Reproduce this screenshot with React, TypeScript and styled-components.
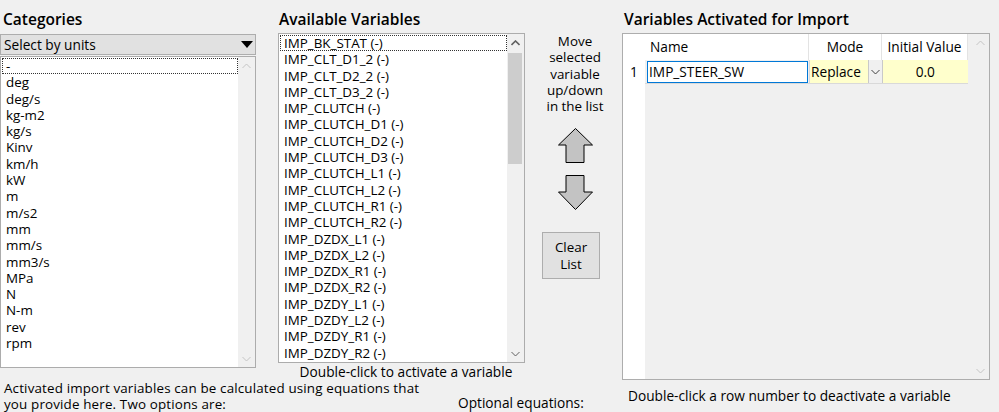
import React from "react";
import styled, { createGlobalStyle } from "styled-components";

const GlobalStyle = createGlobalStyle`
  html, body {
    margin: 0;
    padding: 0;
    background: #f0f0f0;
  }
  body {
    font-family: "Open Sans", "Noto Sans", sans-serif;
    font-size: 13.7px;
    color: #000;
  }
`;

const Page = styled.div`
  width: 999px;
  height: 412px;
  overflow: hidden;
  display: flex;
  flex-direction: column;
`;

const Top = styled.div`
  display: flex;
  height: 380px;
`;

const Column = styled.div<{ $width: number; $gap?: number }>`
  width: ${({ $width }) => $width}px;
  margin-left: ${({ $gap }) => $gap ?? 0}px;
  flex-shrink: 0;
  display: flex;
  flex-direction: column;
`;

const Heading = styled.div<{ $indent: number }>`
  box-sizing: border-box;
  height: 32px;
  padding: 10px 0 0 ${({ $indent }) => $indent}px;
  line-height: 19px;
  font-size: 15.5px;
  font-weight: 600;
  white-space: nowrap;
`;

const Select = styled.div`
  box-sizing: border-box;
  margin-top: 2px;
  height: 21px;
  border: 1px solid #adadad;
  background: #e1e1e1;
  display: flex;
  align-items: center;
  justify-content: space-between;
  padding: 0 2px 0 3px;
  line-height: 19px;
`;

const Caret = styled.span`
  width: 0;
  height: 0;
  border-left: 6px solid transparent;
  border-right: 6px solid transparent;
  border-top: 7px solid #000;
`;

const ListBox = styled.div<{ $height: number }>`
  box-sizing: border-box;
  margin-top: 1px;
  height: ${({ $height }) => $height}px;
  border: 1px solid #acacac;
  background: #fff;
  display: flex;
  overflow: hidden;
`;

const Items = styled.div`
  flex: 1;
  padding: 1px 0 0 1px;
`;

const Item = styled.div<{ $focused?: boolean }>`
  height: 16.3px;
  line-height: 16.3px;
  font-size: 13.4px;
  padding-left: 4px;
  white-space: nowrap;
  outline: ${({ $focused }) => ($focused ? "1px dotted #333" : "none")};
  outline-offset: -1px;
`;

const ScrollBar = styled.div`
  width: 17px;
  flex-shrink: 0;
  background: #f0f0f0;
  display: flex;
  flex-direction: column;
`;

const ScrollButton = styled.div`
  height: 17px;
  display: flex;
  align-items: center;
  justify-content: center;
`;

const Thumb = styled.div<{ $size: number }>`
  height: ${({ $size }) => $size}px;
  margin: 2px 2px 0 1px;
  background: #cdcdcd;
`;

const Spacer = styled.div`
  flex: 1;
`;

const Caption = styled.div`
  margin-top: 1px;
  padding-left: 9px;
  line-height: 16px;
  text-align: center;
  white-space: nowrap;
`;

const MoveText = styled.div`
  margin-top: 33px;
  padding-left: 3px;
  line-height: 16.3px;
  font-size: 13.4px;
  text-align: center;
`;

const ArrowHolder = styled.div<{ $top: number }>`
  margin: ${({ $top }) => $top}px 0 0 33px;
  width: 35px;
  height: 35px;
`;

const ClearButton = styled.div`
  box-sizing: border-box;
  margin: 22px 0 0 17px;
  width: 58px;
  height: 47px;
  border: 1px solid #adadad;
  background: #e1e1e1;
  display: flex;
  align-items: center;
  justify-content: center;
  text-align: center;
  line-height: 16.5px;
  font-size: 13.4px;
`;

const GridBox = styled.div`
  box-sizing: border-box;
  margin-top: 1px;
  height: 347px;
  border: 1px solid #adadad;
  background: #f0f0f0;
  display: flex;
`;

const RowHeaders = styled.div`
  width: 22px;
  background: #fff;
  display: flex;
  flex-direction: column;
`;

const RowHeaderCell = styled.div<{ $height: number }>`
  height: ${({ $height }) => $height}px;
  line-height: ${({ $height }) => $height}px;
  text-align: center;
`;

const Cells = styled.div`
  flex: 1;
  display: flex;
  flex-direction: column;
`;

const Row = styled.div<{ $height: number; $header?: boolean }>`
  display: flex;
  height: ${({ $height }) => $height}px;
  width: 323px;
  background: ${({ $header }) => ($header ? "#fff" : "#f0f0f0")};
  border-bottom: ${({ $header }) => ($header ? "none" : "1px solid #d9d9d9")};
`;

const HeadCell = styled.div<{ $width: number; $align: string }>`
  box-sizing: border-box;
  width: ${({ $width }) => $width}px;
  padding-left: ${({ $align }) => ($align === "left" ? "5px" : "0")};
  text-align: ${({ $align }) => $align};
  line-height: 26px;
  white-space: nowrap;
  border-right: 1px solid #e3e3e3;
`;

const NameCell = styled.div`
  box-sizing: border-box;
  width: 162px;
  margin: 1px 1px 0 2px;
  height: 22px;
  border: 1px solid #0078d7;
  background: #fff;
  padding-left: 1px;
  line-height: 20px;
`;

const ModeCell = styled.div`
  width: 73px;
  display: flex;
  background: #ffffcc;
  border-left: 1px solid #d9d9d9;
`;

const ModeText = styled.div`
  flex: 1;
  padding-left: 1px;
  line-height: 23px;
  white-space: nowrap;
`;

const DropButton = styled.div`
  width: 13px;
  flex-shrink: 0;
  background: #f0f0f0;
  border-left: 1px solid #c9c9c9;
  border-right: 1px solid #c9c9c9;
  display: flex;
  align-items: center;
  justify-content: center;
`;

const ValueCell = styled.div`
  width: 86px;
  background: #ffffcc;
  text-align: center;
  line-height: 23px;
`;

const Bottom = styled.div`
  display: grid;
  grid-template-columns: 454px 168px 1fr;
  height: 32px;
`;

const Note = styled.div`
  padding-left: 4px;
  font-size: 13.4px;
  letter-spacing: 0.15px;
  line-height: 16.3px;
  white-space: nowrap;
`;

const Optional = styled.div`
  align-self: end;
  padding: 0 0 2px 4px;
  line-height: 16px;
  white-space: nowrap;
`;

const RightNote = styled.div`
  padding: 8px 0 0 6px;
  line-height: 16px;
  white-space: nowrap;
`;

function Chevron({ up, color }: { up?: boolean; color: string }) {
  return (
    <svg width="9" height="6" viewBox="0 0 9 6">
      <polyline
        points={up ? "0.5,5 4.5,1 8.5,5" : "0.5,1 4.5,5 8.5,1"}
        fill="none"
        stroke={color}
        strokeWidth={up && color === "#606060" ? 1.6 : 1}
      />
    </svg>
  );
}

function BigArrow({ up }: { up?: boolean }) {
  const points = up
    ? "17.5,0.5 34.5,17 26,17 26,34.5 8,34.5 8,17 0.5,17"
    : "8,0.5 26,0.5 26,17 34.5,17 17.5,34.5 0.5,17 8,17";
  return (
    <svg width="35" height="35" viewBox="0 0 35 35">
      <polygon points={points} fill="#c3c3c3" stroke="#000" strokeWidth="1" />
    </svg>
  );
}

const units = [
  "-", "deg", "deg/s", "kg-m2", "kg/s", "Kinv", "km/h", "kW", "m", "m/s2",
  "mm", "mm/s", "mm3/s", "MPa", "N", "N-m", "rev", "rpm",
];

const variables = [
  "IMP_BK_STAT", "IMP_CLT_D1_2", "IMP_CLT_D2_2", "IMP_CLT_D3_2", "IMP_CLUTCH",
  "IMP_CLUTCH_D1", "IMP_CLUTCH_D2", "IMP_CLUTCH_D3", "IMP_CLUTCH_L1", "IMP_CLUTCH_L2",
  "IMP_CLUTCH_R1", "IMP_CLUTCH_R2", "IMP_DZDX_L1", "IMP_DZDX_L2", "IMP_DZDX_R1",
  "IMP_DZDX_R2", "IMP_DZDY_L1", "IMP_DZDY_L2", "IMP_DZDY_R1", "IMP_DZDY_R2",
];

export default function App() {
  return (
    <Page>
      <GlobalStyle />
      <Top>
        <Column $width={256}>
          <Heading $indent={3}>Categories</Heading>
          <Select>
            <span>Select by units</span>
            <Caret />
          </Select>
          <ListBox $height={312}>
            <Items>
              {units.map((u, i) => (
                <Item key={u} $focused={i === 0}>{u}</Item>
              ))}
            </Items>
            <ScrollBar>
              <ScrollButton><Chevron up color="#c4c4c4" /></ScrollButton>
              <Spacer />
              <ScrollButton><Chevron color="#c4c4c4" /></ScrollButton>
            </ScrollBar>
          </ListBox>
        </Column>

        <Column $width={247} $gap={22}>
          <Heading $indent={1}>Available Variables</Heading>
          <ListBox $height={330}>
            <Items>
              {variables.map((v, i) => (
                <Item key={v} $focused={i === 0}>{v} (-)</Item>
              ))}
            </Items>
            <ScrollBar>
              <ScrollButton><Chevron up color="#606060" /></ScrollButton>
              <Thumb $size={111} />
              <Spacer />
              <ScrollButton><Chevron color="#606060" /></ScrollButton>
            </ScrollBar>
          </ListBox>
          <Caption>Double-click to activate a variable</Caption>
        </Column>

        <Column $width={97}>
          <MoveText>
            Move<br />selected<br />variable<br />up/down<br />in the list
          </MoveText>
          <ArrowHolder $top={14}><BigArrow up /></ArrowHolder>
          <ArrowHolder $top={12}><BigArrow /></ArrowHolder>
          <ClearButton>Clear<br />List</ClearButton>
        </Column>

        <Column $width={368}>
          <Heading $indent={2}>Variables Activated for Import</Heading>
          <GridBox>
            <RowHeaders>
              <RowHeaderCell $height={26} />
              <RowHeaderCell $height={23}>1</RowHeaderCell>
            </RowHeaders>
            <Cells>
              <Row $height={26} $header>
                <HeadCell $width={164} $align="left">Name</HeadCell>
                <HeadCell $width={73} $align="center">Mode</HeadCell>
                <HeadCell $width={86} $align="center">Initial Value</HeadCell>
              </Row>
              <Row $height={23}>
                <NameCell>IMP_STEER_SW</NameCell>
                <ModeCell>
                  <ModeText>Replace</ModeText>
                  <DropButton><Chevron color="#404040" /></DropButton>
                </ModeCell>
                <ValueCell>0.0</ValueCell>
              </Row>
            </Cells>
            <ScrollBar>
              <ScrollButton><Chevron up color="#c4c4c4" /></ScrollButton>
              <Spacer />
              <ScrollButton><Chevron color="#c4c4c4" /></ScrollButton>
            </ScrollBar>
          </GridBox>
        </Column>
      </Top>

      <Bottom>
        <Note>
          Activated import variables can be calculated using equations that
          <br />
          you provide here. Two options are:
        </Note>
        <Optional>Optional equations:</Optional>
        <RightNote>Double-click a row number to deactivate a variable</RightNote>
      </Bottom>
    </Page>
  );
}
